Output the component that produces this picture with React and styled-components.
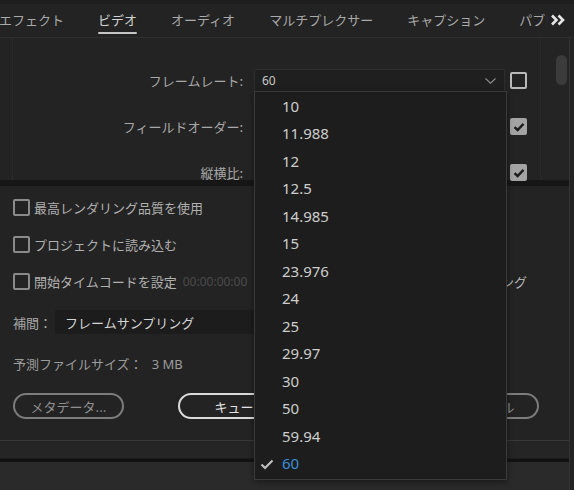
import React from 'react';
import styled, { createGlobalStyle } from 'styled-components';

const GlobalStyle = createGlobalStyle`
  html, body {
    margin: 0;
    padding: 0;
    background: #232323;
  }
  * {
    box-sizing: border-box;
  }
`;

const jp = `"Noto Sans CJK JP", "Noto Sans", sans-serif`;
const latin = `"Noto Sans", "Noto Sans CJK JP", sans-serif`;

const Page = styled.div`
  width: 574px;
  height: 490px;
  overflow: hidden;
  background: #232323;
  display: flex;
  flex-direction: column;
  font-family: ${jp};
`;

const TopStrip = styled.div`
  height: 4px;
  background: #1e1e1e;
`;

const TabBar = styled.div`
  height: 34px;
  display: flex;
  align-items: stretch;
  border-bottom: 1px solid #2f2f2f;
`;

const TabList = styled.div`
  flex: 1;
  display: flex;
  gap: 34px;
  overflow: hidden;
  margin-left: -1px;
`;

const Tab = styled.div`
  position: relative;
  flex-shrink: 0;
  display: flex;
  align-items: center;
  padding-bottom: 2px;
  font-size: 13px;
  color: ${(p) => (p.$active ? '#d2d2d2' : '#a9a9a9')};

  &::after {
    content: '';
    display: ${(p) => (p.$active ? 'block' : 'none')};
    position: absolute;
    left: 0;
    right: 0;
    bottom: 3px;
    height: 2px;
    border-radius: 1px;
    background: #c4c4c4;
  }
`;

const MoreTabs = styled.div`
  width: 26px;
  display: flex;
  align-items: center;
  padding-left: 2px;
  padding-bottom: 2px;
`;

const Body = styled.div`
  flex: 1;
  display: flex;
  flex-direction: column;
  width: 570px;
  border-right: 1px solid #333;
`;

const Upper = styled.div`
  position: relative;
  z-index: 5;
  height: 142px;
  display: flex;
`;

const Gutter = styled.div`
  width: 13px;
  border-right: 1px solid #2c2c2c;
`;

const FormGrid = styled.div`
  flex: 1;
  display: grid;
  grid-template-columns: 241px 256px 17px;
  grid-auto-rows: 23px;
  row-gap: 23px;
  align-content: start;
  padding-top: 31px;
`;

const FieldLabel = styled.div`
  display: flex;
  align-items: center;
  justify-content: flex-end;
  padding-right: 11px;
  font-size: 13px;
  color: #a8a8a8;
`;

const ScrollColumn = styled.div`
  width: 29px;
  border-left: 1px solid #2b2b2b;
  display: flex;
  justify-content: flex-end;
  padding: 17px 2px 0 0;
  background: #242424;
`;

const Thumb = styled.div`
  width: 11px;
  height: 30px;
  border-radius: 6px;
  background: #3b3b3b;
`;

const SelectWrap = styled.div`
  position: relative;
  width: 251px;
`;

const SelectBox = styled.div`
  height: 23px;
  display: flex;
  align-items: center;
  justify-content: space-between;
  padding: 0 8px 0 7px;
  background: #1f1f1f;
  border: 1px solid #2d2d2d;
  border-radius: 2px;
  font-family: ${latin};
  font-size: 12px;
  color: #c8c8c8;
`;

const Menu = styled.div`
  position: absolute;
  top: calc(100% - 1px);
  left: 0;
  width: 253px;
  padding: 0 0 2px;
  background: #1d1d1d;
  border: 1px solid #3a3a3a;
  box-shadow: 0 2px 6px rgba(0, 0, 0, 0.4);
  z-index: 10;
`;

const MenuItem = styled.div`
  height: 27.5px;
  display: flex;
  align-items: center;
  padding-left: 27px;
  position: relative;
  font-family: ${latin};
  font-size: 15px;
  color: ${(p) => (p.$selected ? '#3b8fdb' : '#cdcdcd')};
`;

const Tick = styled.svg`
  position: absolute;
  left: 5px;
  top: 9px;
`;

const Box = styled.div`
  width: 17px;
  height: 17px;
  border-radius: 2px;
  flex-shrink: 0;
  display: flex;
  align-items: center;
  justify-content: center;
  border: ${(p) => (p.$checked ? 'none' : `2px solid ${p.$dim ? '#8a8a8a' : '#b9b9b9'}`)};
  background: ${(p) => (p.$checked ? '#a3a3a3' : 'transparent')};
  align-self: center;
`;

const Check = ({ checked, dim }) => (
  <Box $checked={checked} $dim={dim}>
    {checked && (
      <svg width="12" height="10" viewBox="0 0 12 10">
        <path d="M1.5 5.2 L4.6 8 L10.5 1.8" fill="none" stroke="#1b1b1b" strokeWidth="2.4" />
      </svg>
    )}
  </Box>
);

const Divider = styled.div`
  height: 6px;
  background: #161616;
`;

const Lower = styled.div`
  height: 255px;
  display: flex;
  flex-direction: column;
  gap: 21px;
  padding: 13px 42px 0 13px;
  border-bottom: 1px solid #393939;
`;

const CheckRow = styled.div`
  height: 16px;
  display: flex;
  align-items: center;
  gap: 4px;
  font-size: 13px;
  color: #b0b0b0;
  white-space: nowrap;
`;

const Timecode = styled.span`
  margin-left: 2px;
  font-family: ${latin};
  font-size: 12px;
  color: #4b4b4b;
`;

const RightOption = styled.div`
  margin-left: auto;
  display: flex;
  align-items: center;
  gap: 4px;
`;

const InlineRow = styled.div`
  height: 24px;
  display: flex;
  align-items: center;
  font-size: 13px;
  color: #a6a6a6;
`;

const WideSelect = styled.div`
  margin-left: 3px;
  width: 250px;
  height: 24px;
  display: flex;
  align-items: center;
  padding-left: 10px;
  background: #1c1c1c;
  border-radius: 2px;
  color: #d4d4d4;
`;

const InfoText = styled.div`
  height: 17px;
  display: flex;
  align-items: center;
  font-size: 13px;
  color: #9c9c9c;
`;

const Size = styled.span`
  margin-left: 9px;
  font-family: ${latin};
`;

const ButtonRow = styled.div`
  height: 26px;
  display: flex;
  align-items: center;
`;

const Pill = styled.div`
  flex-shrink: 0;
  height: 26px;
  width: ${(p) => p.$w}px;
  margin-left: ${(p) => p.$ml || 0}px;
  display: flex;
  align-items: center;
  justify-content: center;
  border-radius: 13px;
  border: 2px solid ${(p) => (p.$primary ? '#dadada' : '#7c7c7c')};
  font-size: 13px;
  color: ${(p) => (p.$primary ? '#e4e4e4' : '#8e8e8e')};
`;

const Footer = styled.div`
  flex: 1;
  display: flex;
  flex-direction: column;
`;

const FooterBand = styled.div`
  height: 17px;
  background: #252525;
`;

const FooterRule = styled.div`
  height: 4px;
  background: #121212;
  border-top: 1px solid #1c1c1c;
`;

const FooterBase = styled.div`
  flex: 1;
  background: #2a2a2a;
`;

const rates = ['10', '11.988', '12', '12.5', '14.985', '15', '23.976', '24', '25', '29.97', '30', '50', '59.94', '60'];

const tabs = ['エフェクト', 'ビデオ', 'オーディオ', 'マルチプレクサー', 'キャプション', 'パブリッシュ'];

export default function App() {
  return (
    <Page>
      <GlobalStyle />
      <TopStrip />
      <TabBar>
        <TabList>
          {tabs.map((t) => (
            <Tab key={t} $active={t === 'ビデオ'}>{t}</Tab>
          ))}
        </TabList>
        <MoreTabs>
          <svg width="16" height="12" viewBox="0 0 16 12">
            <path d="M2 1.5 L6.5 6 L2 10.5 M8.5 1.5 L13 6 L8.5 10.5" fill="none" stroke="#e6e6e6" strokeWidth="2.6" />
          </svg>
        </MoreTabs>
      </TabBar>
      <Body>
        <Upper>
          <Gutter />
          <FormGrid>
            <FieldLabel>フレームレート:</FieldLabel>
            <SelectWrap>
              <SelectBox>
                <span>60</span>
                <svg width="11" height="6" viewBox="0 0 11 6">
                  <path d="M0.5 0.5 L5.5 5.2 L10.5 0.5" fill="none" stroke="#8c8c8c" strokeWidth="1.1" />
                </svg>
              </SelectBox>
              <Menu>
                {rates.map((r) => (
                  <MenuItem key={r} $selected={r === '60'}>
                    {r === '60' && (
                      <Tick width="14" height="11" viewBox="0 0 14 11">
                        <path d="M1.5 5.5 L5 9 L12.5 1.5" fill="none" stroke="#bdbdbd" strokeWidth="2.2" />
                      </Tick>
                    )}
                    {r}
                  </MenuItem>
                ))}
              </Menu>
            </SelectWrap>
            <Check />
            <FieldLabel>フィールドオーダー:</FieldLabel>
            <SelectWrap />
            <Check checked />
            <FieldLabel>縦横比:</FieldLabel>
            <SelectWrap />
            <Check checked />
          </FormGrid>
          <ScrollColumn>
            <Thumb />
          </ScrollColumn>
        </Upper>
        <Divider />
        <Lower>
          <CheckRow>
            <Check dim />
            最高レンダリング品質を使用
          </CheckRow>
          <CheckRow>
            <Check dim />
            プロジェクトに読み込む
          </CheckRow>
          <CheckRow>
            <Check dim />
            開始タイムコードを設定
            <Timecode>00:00:00:00</Timecode>
            <RightOption>
              <Check dim />
              アルファチャンネルのみレンダリング
            </RightOption>
          </CheckRow>
          <InlineRow>
            補間：
            <WideSelect>フレームサンプリング</WideSelect>
          </InlineRow>
          <InfoText>
            予測ファイルサイズ：
            <Size>3 MB</Size>
          </InfoText>
          <ButtonRow>
            <Pill $w={111}>メタデータ...</Pill>
            <Pill $w={112} $ml={54} $primary>キュー</Pill>
            <Pill $w={112} $ml={11} $primary>書き出し</Pill>
            <Pill $w={114} $ml={12}>キャンセル</Pill>
          </ButtonRow>
        </Lower>
        <Footer>
          <FooterBand />
          <FooterRule />
          <FooterBase />
        </Footer>
      </Body>
    </Page>
  );
}
